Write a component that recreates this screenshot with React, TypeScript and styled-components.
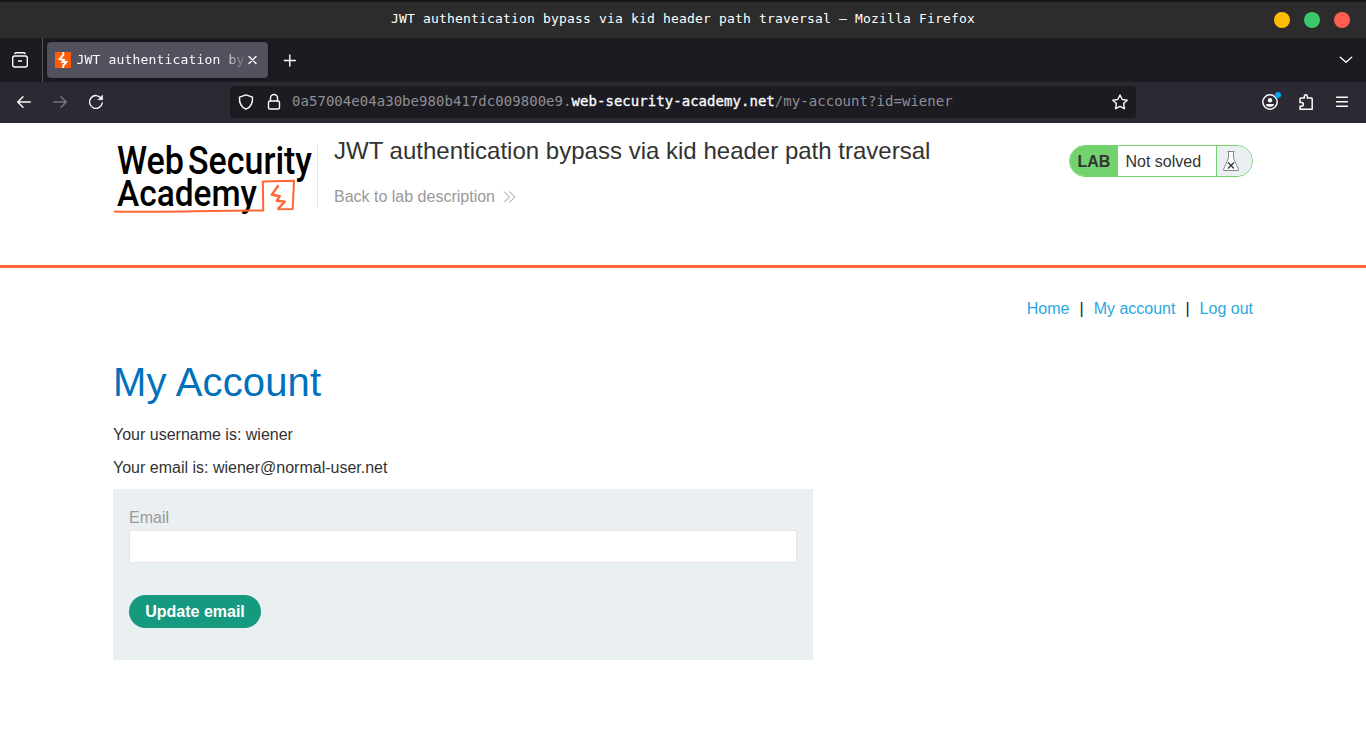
import React from "react";
import styled, { createGlobalStyle } from "styled-components";

const Global = createGlobalStyle`
  * { box-sizing: border-box; }
  body { margin: 0; background: #fff; font-family: "Liberation Sans", Arial, sans-serif; color: #333332; font-size: 16px; line-height: 20px; }
  h1, h2, p { margin: 0; font-weight: 400; }
  a { text-decoration: none; }
  svg { display: block; flex: none; }
`;

const Window = styled.div`
  width: 1366px;
  height: 740px;
  overflow: hidden;
  display: flex;
  flex-direction: column;
`;
const mono = `font-family: "DejaVu Sans Mono", monospace;`;

const TitleBar = styled.div`
  height: 38px;
  flex: none;
  border-top: 2px solid #161616;
  background: #2c2c2c;
  display: grid;
  grid-template-columns: 1fr auto 1fr;
  align-items: center;
`;
const WindowTitle = styled.div`
  ${mono}
  grid-column: 2;
  color: #fff;
  font-size: 13px;
  letter-spacing: 0.174px;
  white-space: pre;
  padding-bottom: 3px;
`;
const Controls = styled.div`
  display: flex;
  justify-content: flex-end;
  gap: 14px;
  padding-right: 16px;
`;
const Dot = styled.span<{ $color: string }>`
  width: 16px;
  height: 16px;
  border-radius: 50%;
  background: ${(p) => p.$color};
`;

const TabStrip = styled.div`
  height: 44px;
  flex: none;
  background: #1c1b22;
  display: flex;
  align-items: center;
`;
const FirefoxView = styled.div`
  width: 43px;
  height: 44px;
  padding: 14px 0 0 12px;
  border-right: 1px solid #56555d;
`;
const Tab = styled.div`
  width: 221px;
  height: 36px;
  margin-left: 4px;
  border-radius: 4px;
  background: #52525e;
  box-shadow: 0 0 3px rgba(0, 0, 0, 0.5);
  display: flex;
  align-items: center;
  padding-left: 8px;
`;
const TabTitle = styled.div`
  ${mono}
  width: 168px;
  margin-left: 5.5px;
  margin-right: 0.5px;
  overflow: hidden;
  white-space: pre;
  color: #fbfbfe;
  font-size: 13px;
  letter-spacing: 0.174px;
  mask-image: linear-gradient(to right, #000 144px, transparent 172px);
`;
const NewTab = styled.div`
  margin-left: 14px;
`;
const AllTabs = styled.div`
  margin-left: auto;
  padding-right: 12px;
`;

const Toolbar = styled.div`
  height: 41px;
  flex: none;
  background: #2b2a33;
  display: flex;
  align-items: center;
  padding: 0 16px 1px;
`;
const NavButtons = styled.div`
  width: 214px;
  display: flex;
  gap: 20px;
`;
const UrlField = styled.div`
  width: 906px;
  height: 32px;
  border-radius: 4px;
  background: #1c1b22;
  display: flex;
  align-items: center;
  padding: 0 8px;
`;
const FieldIcons = styled.div`
  display: flex;
  gap: 12px;
  margin-right: 10px;
`;
const Url = styled.div`
  ${mono}
  flex: 1;
  font-size: 14px;
  letter-spacing: 0.042px;
  color: #8e8e93;
  white-space: pre;
  padding-bottom: 2px;
`;
const Domain = styled.span`
  color: #fbfbfe;
  -webkit-text-stroke: 0.3px #fbfbfe;
`;
const ToolButtons = styled.div`
  margin-left: auto;
  display: flex;
  gap: 20px;
`;

const LabHeader = styled.header`
  height: 145px;
  flex: none;
  border-bottom: 3px solid #ff6633;
  padding: 14px 113px 0;
  display: flex;
`;
const Brand = styled.div`
  width: 205px;
  height: 62px;
  margin-top: 8px;
  border-right: 1px solid #e4e4e4;
`;
const Titles = styled.div`
  flex: 1;
  padding-left: 16px;
`;
const LabTitle = styled.h2`
  font-size: 24px;
  line-height: 28px;
  letter-spacing: 0.01px;
`;
const BackLink = styled.a`
  display: flex;
  align-items: center;
  gap: 8px;
  margin-top: 22px;
  color: #999;
`;
const Status = styled.div`
  width: 184px;
  height: 32px;
  margin-top: 8px;
  border: 1px solid #72d26e;
  border-radius: 16px;
  overflow: hidden;
  display: flex;
  line-height: 32px;
`;
const StatusLabel = styled.strong`
  width: 48px;
  padding: 0 0 0 7.5px;
  background: #72d26e;
`;
const StatusText = styled.span`
  flex: 1;
  padding-left: 7.5px;
`;
const StatusFlask = styled.span`
  width: 36px;
  border-left: 1px solid #72d26e;
  background: #eaeff2;
  padding: 5px 0 0 6px;
`;

const Content = styled.main`
  padding: 31px 113px 0;
`;
const Links = styled.nav`
  display: flex;
  justify-content: flex-end;
  gap: 10px;
  color: #222;
`;
const NavLink = styled.a`
  color: #29a7e1;
`;
const Heading = styled.h1`
  margin-top: 40px;
  font-size: 40px;
  line-height: 46px;
  letter-spacing: 0.15px;
  color: #0071bc;
`;
const Line = styled.p<{ $top: number }>`
  margin-top: ${(p) => p.$top}px;
`;
const Form = styled.form`
  width: 700px;
  height: 171px;
  margin-top: 11px;
  padding: 19px 16px 0;
  background: #eaeff2;
  display: flex;
  flex-direction: column;
  align-items: flex-start;
`;
const Label = styled.label`
  color: #999;
`;
const Input = styled.input`
  width: 100%;
  height: 33px;
  margin-top: 2px;
  padding: 4px 8px;
  border: 1px solid #e4e4e4;
  background: #fff;
  font: inherit;
  outline: none;
`;
const Submit = styled.button`
  width: 132px;
  height: 33px;
  margin-top: 32px;
  padding: 0;
  border: 0;
  border-radius: 17px;
  background: #159a80;
  color: #fff;
  font: bold 16px "Liberation Sans", Arial, sans-serif;
`;

type IconProps = { children: React.ReactNode; color?: string; w?: number };
const Icon = ({ children, color = "#fbfbfe", w = 1.4 }: IconProps) => (
  <svg width="16" height="16" viewBox="0 0 16 16" fill="none" stroke={color} strokeWidth={w} strokeLinecap="round" strokeLinejoin="round" overflow="visible">
    {children}
  </svg>
);

const Logo = () => (
  <svg width="204" height="76" viewBox="0 0 204 76" overflow="visible">
    <g fill="#000" fontFamily="Roboto, sans-serif" fontWeight="500">
      <text x="4" y="28.6" fontSize="38.5" textLength="67" lengthAdjust="spacingAndGlyphs">Web</text>
      <text x="75" y="28.6" fontSize="38.5" textLength="124" lengthAdjust="spacingAndGlyphs">Security</text>
      <text x="4" y="61" fontSize="37.5" textLength="140" lengthAdjust="spacingAndGlyphs">Academy</text>
    </g>
    <g fill="none" stroke="#ff6633" strokeLinejoin="round">
      <path d="M1 66.6C20 67.6 85 66 150.3 65.5L149.8 36.5L181 35.7L179.7 64L164.5 64.3" strokeWidth="2" />
      <path d="M165.5 40.3L158.8 49.7L166.8 51.2L163.8 55.8L171.8 56.6L164.8 64" strokeWidth="2.4" />
    </g>
  </svg>
);

export default function App() {
  return (
    <Window>
      <Global />
      <TitleBar>
        <WindowTitle>JWT authentication bypass via kid header path traversal — Mozilla Firefox</WindowTitle>
        <Controls>
          <Dot $color="#ffbd06" />
          <Dot $color="#3bc76a" />
          <Dot $color="#ff5f52" />
        </Controls>
      </TitleBar>
      <TabStrip>
        <FirefoxView>
          <Icon>
            <rect x="0.7" y="4" width="14.6" height="11" rx="2" />
            <path d="M2.8 1.5C3.2 .9 3.8 .8 4.5 .8H11.5C12.2 .8 12.8 .9 13.2 1.5M6.5 9H9.5" />
          </Icon>
        </FirefoxView>
        <Tab>
          <svg width="16" height="16" viewBox="0 0 16 16">
            <rect width="16" height="16" fill="#ff5c05" />
            <path d="M8.3 0V2.8L4.6 7.2L9 8L7.5 10L11.3 9.9L8.2 13.6V16" fill="none" stroke="#fff" strokeWidth="1.9" />
          </svg>
          <TabTitle>JWT authentication by</TabTitle>
          <Icon><path d="M4 4.4L11 11.4M11 4.4L4 11.4" /></Icon>
        </Tab>
        <NewTab><Icon><path d="M2.3 8.5H13.3M7.8 3V14" /></Icon></NewTab>
        <AllTabs><Icon w={1.3}><path d="M2.3 5.2L8 10.3L13.7 5.2" /></Icon></AllTabs>
      </TabStrip>
      <Toolbar>
        <NavButtons>
          <Icon><path d="M1.7 8H14.3M7 2.7L1.7 8L7 13.3" /></Icon>
          <Icon color="#77767d"><path d="M1.7 8H14.3M9 2.7L14.3 8L9 13.3" /></Icon>
          <Icon><path d="M13.3 4.4A6.4 6.4 0 1 0 14.3 9" /><path d="M14.6 1.3V5.8H10.1Z" fill="#fbfbfe" strokeWidth=".5" /></Icon>
        </NavButtons>
        <UrlField>
          <FieldIcons>
            <Icon><path d="M8 .8L14.5 3.2C14.9 9 12 13.5 8 15.2C4 13.5 1.1 9 1.5 3.2Z" /></Icon>
            <Icon><rect x="2.5" y="7" width="11" height="8" rx="1.5" /><path d="M4.5 7V4A3.5 3.5 0 0 1 11.5 4V7" /></Icon>
          </FieldIcons>
          <Url>0a57004e04a30be980b417dc009800e9.<Domain>web-security-academy.net</Domain>/my-account?id=wiener</Url>
          <Icon><path d="M8 1L10.2 5.5L15.2 6.2L11.6 9.6L12.5 14.7L8 12.3L3.5 14.7L4.4 9.6L.8 6.2L5.8 5.5Z" /></Icon>
        </UrlField>
        <ToolButtons>
          <Icon w={1.5}>
            <circle cx="8" cy="8" r="7.2" />
            <circle cx="8" cy="6.2" r="2.2" fill="#fbfbfe" stroke="none" />
            <path d="M4 9.9H12C12 12 10 12.7 8 12.7S4 12 4 9.9Z" fill="#fbfbfe" stroke="none" />
            <circle cx="16" cy="1" r="3" fill="#00a7fa" stroke="none" />
          </Icon>
          <Icon w={1.5}>
            <path d="M3 4H6.3V2.3A1.5 1.5 0 0 1 9.3 2.3V4H13.3C13.9 4 14.2 4.4 14.2 5V15.2H2V12.2H3.5A1.8 1.8 0 0 0 3.5 8.5H2V5C2 4.4 2.3 4 3 4Z" />
          </Icon>
          <Icon><path d="M2.6 3.3H13.4M2.6 7.8H13.4M2.6 12.3H13.4" /></Icon>
        </ToolButtons>
      </Toolbar>
      <LabHeader>
        <Brand><Logo /></Brand>
        <Titles>
          <LabTitle>JWT authentication bypass via kid header path traversal</LabTitle>
          <BackLink>
            Back to lab description
            <svg width="13" height="12" viewBox="0 0 13 12" fill="none" stroke="#999"><path d="M1 .5L6.5 6L1 11.5M6.3 .5L11.8 6L6.3 11.5" /></svg>
          </BackLink>
        </Titles>
        <Status>
          <StatusLabel>LAB</StatusLabel>
          <StatusText>Not solved</StatusText>
          <StatusFlask>
            <svg width="16" height="20" viewBox="0 0 16 20" fill="#fff" stroke="#888">
              <path d="M5.5 .5V7L.7 18V19.5H15.3V18L10.5 7V.5Z" />
              <path d="M4.5 .5H11.5" />
              <path d="M5 11.5L11 17.5M11 11.5L5 17.5" stroke="#333" strokeWidth="1.3" />
            </svg>
          </StatusFlask>
        </Status>
      </LabHeader>
      <Content>
        <Links>
          <NavLink>Home</NavLink><span>|</span><NavLink>My account</NavLink><span>|</span><NavLink>Log out</NavLink>
        </Links>
        <Heading>My Account</Heading>
        <Line $top={20}>Your username is: wiener</Line>
        <Line $top={13}>Your email is: wiener@normal-user.net</Line>
        <Form>
          <Label htmlFor="email">Email</Label>
          <Input id="email" />
          <Submit type="button">Update email</Submit>
        </Form>
      </Content>
    </Window>
  );
}
